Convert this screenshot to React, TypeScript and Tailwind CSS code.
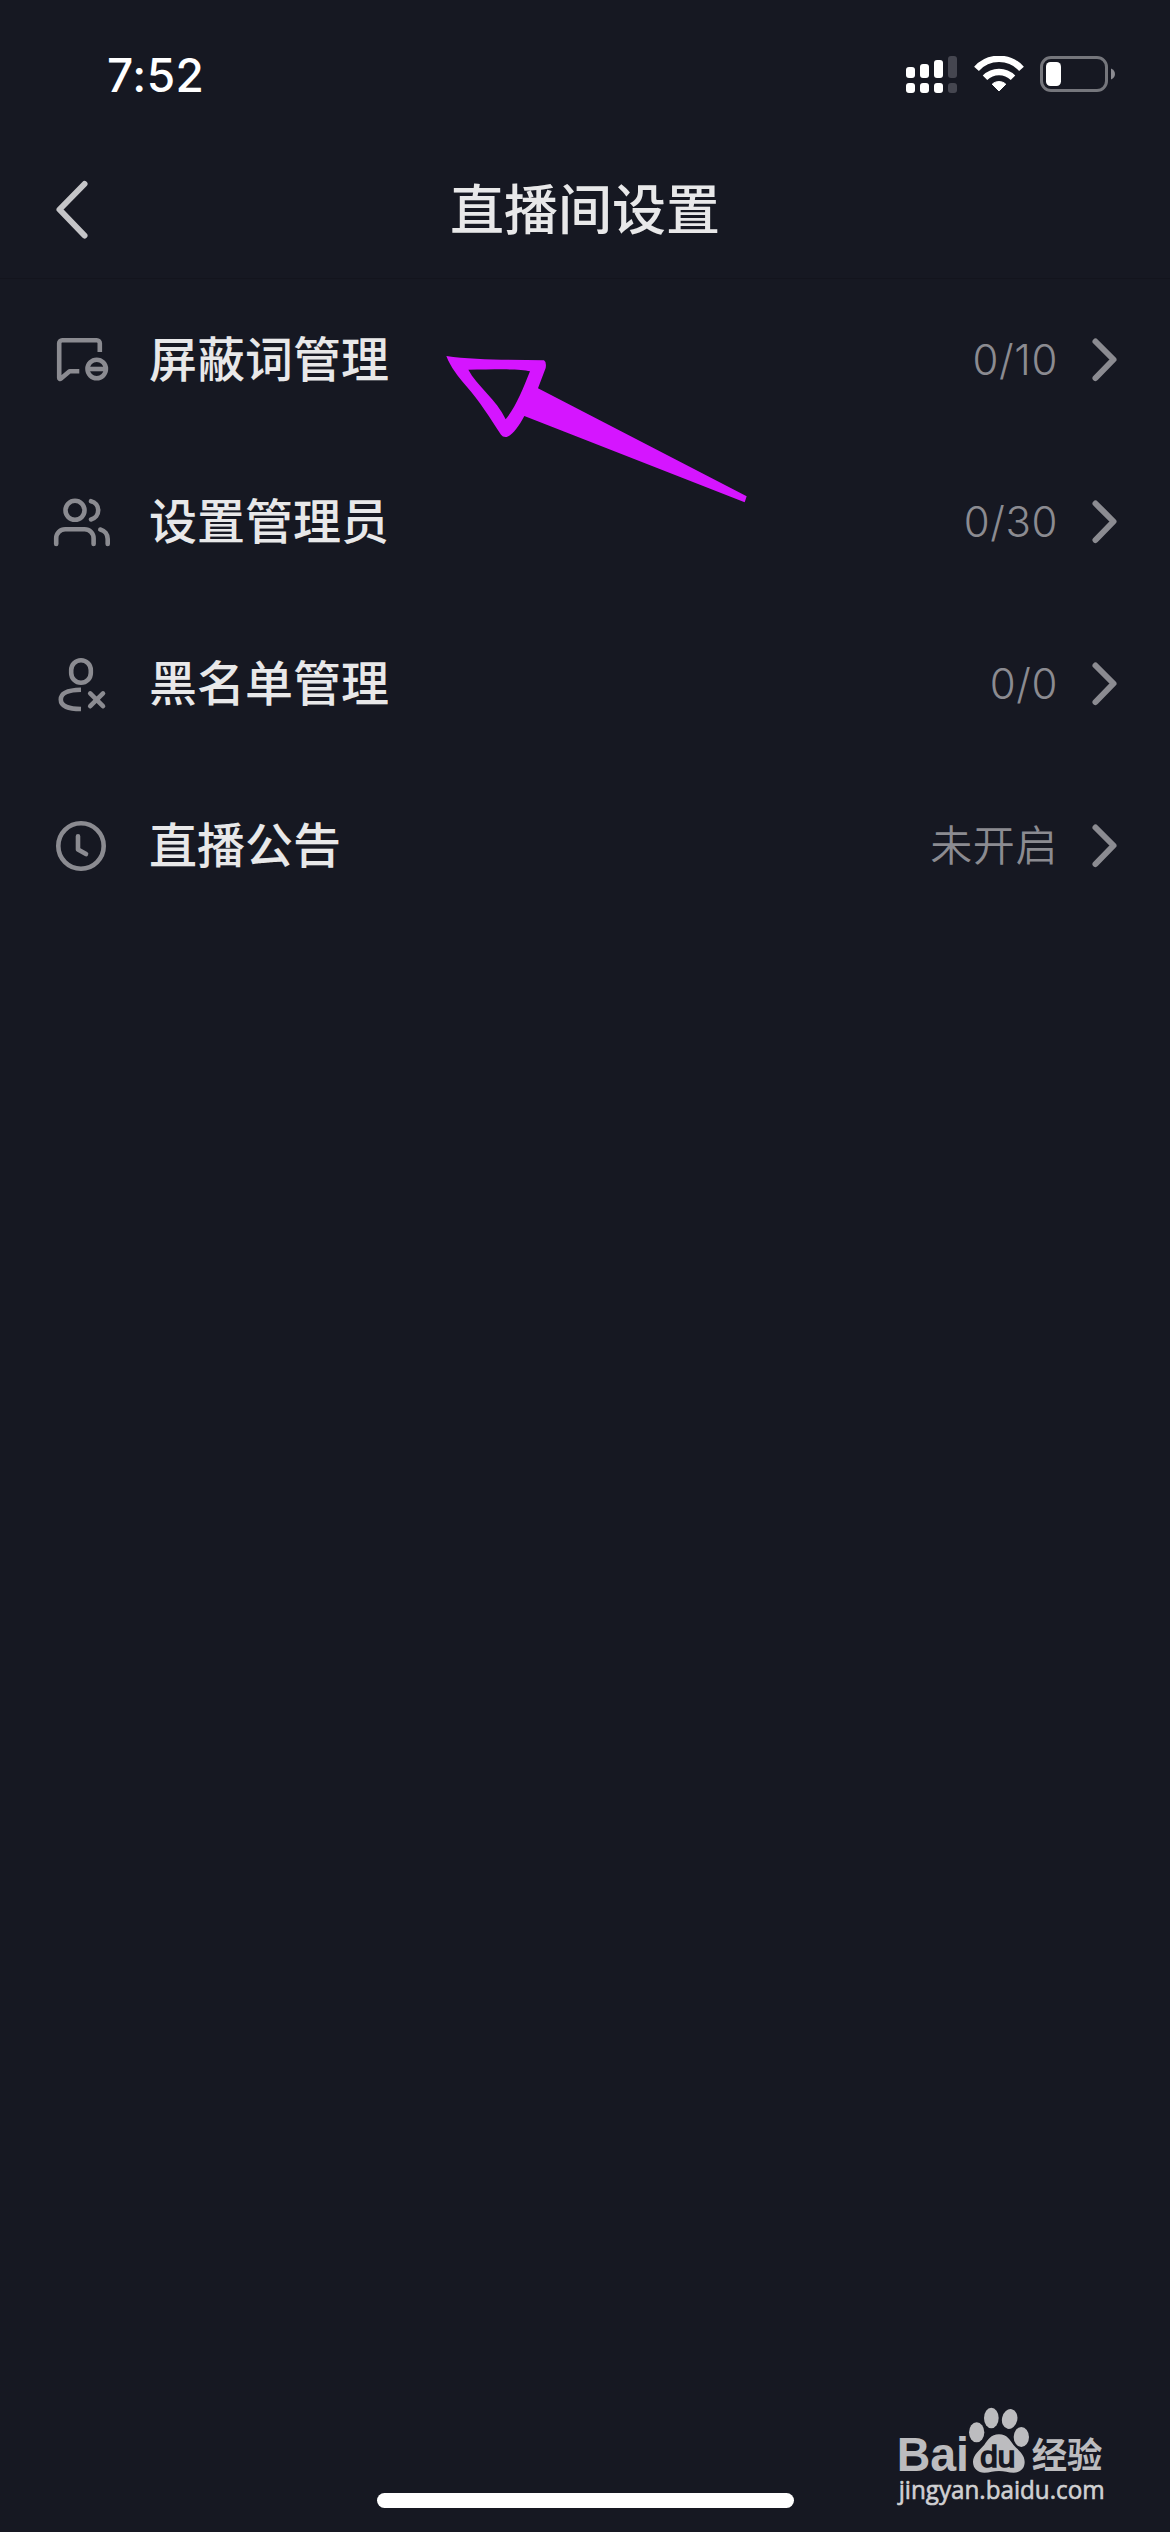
import type { FC, ReactNode } from "react"

type IconProps = {
  className?: string
}

type RowIconProps = {
  children: ReactNode
}

const RowIcon: FC<RowIconProps> = ({ children }) => (
  <svg
    className="size-[60px] shrink-0"
    viewBox="0 0 60 60"
    fill="none"
    stroke="currentColor"
    strokeWidth="4.6"
    strokeLinecap="round"
    strokeLinejoin="round"
  >
    {children}
  </svg>
)

const BlockedWordsIcon: FC = () => (
  <RowIcon>
    <path
      d="M48.800 22V13.200a3 3 0 0 0-3-3H11.200a3 3 0 0 0-3 3V48c0 .8.9 1.200 1.500.7L18.600 41.200H28.300"
      strokeLinecap="butt"
    />
    <circle cx="45.7" cy="39" r="9.2" />
    <path d="M37 39h17.400" strokeLinecap="butt" />
  </RowIcon>
)

const AdminsIcon: FC = () => (
  <RowIcon>
    <circle cx="24" cy="18.3" r="9.5" />
    <path d="M5.200 52V46.300a9 9 0 0 1 9-9H33.600a9 9 0 0 1 9 9V52" />
    <path d="M40 9.200c4.300.9 7.200 4.700 7.200 9.100s-2.900 8.200-7.200 9.100" />
    <path d="M49.300 37.500c4.500 1.200 7.400 5 7.400 9.500v5" />
  </RowIcon>
)

const BlacklistIcon: FC = () => (
  <RowIcon>
    <rect x="20.2" y="6.2" width="19.6" height="22.6" rx="9.8" />
    <path
      d="M30 35.800C17 36 9.800 38.500 9.800 45.500S17 54.800 30 55"
      strokeLinecap="butt"
    />
    <path d="M39.200 39.400l12.800 12.800M52 39.400L39.200 52.200" />
  </RowIcon>
)

const NoticeIcon: FC = () => (
  <RowIcon>
    <circle cx="30" cy="30" r="22.7" />
    <path d="M27 20.300V33.500l8 4.600" />
  </RowIcon>
)

const Chevron: FC<IconProps> = ({ className }) => (
  <svg
    className={className}
    viewBox="0 0 30 50"
    fill="none"
    stroke="currentColor"
    strokeWidth="6"
    strokeLinecap="round"
    strokeLinejoin="round"
  >
    <path d="M5.500 6.500l18 18L5.500 43" />
  </svg>
)

const BackIcon: FC<IconProps> = ({ className }) => (
  <svg
    className={className}
    viewBox="0 0 40 70"
    fill="none"
    stroke="currentColor"
    strokeWidth="6"
    strokeLinecap="round"
    strokeLinejoin="round"
  >
    <path d="M34.500 9L9.500 34.500l25 26" />
  </svg>
)

const SignalIcon: FC = () => (
  <svg className="w-[52px] h-[38px]" viewBox="0 0 52 38" fill="#fff">
    <rect x="0" y="11" width="9" height="11" rx="3" />
    <rect x="14" y="8" width="9" height="14" rx="3" />
    <rect x="28" y="4" width="9" height="18" rx="3" />
    <rect x="42" y="0" width="9" height="22" rx="3" fill="#454650" />
    <rect x="0" y="27" width="9" height="10" rx="3" />
    <rect x="14" y="27" width="9" height="10" rx="3" />
    <rect x="28" y="27" width="9" height="10" rx="3" />
    <rect x="42" y="27" width="9" height="10" rx="3" fill="#454650" />
  </svg>
)

const WifiIcon: FC = () => (
  <svg
    className="w-[50px] h-[38px]"
    viewBox="0 0 50 38"
    fill="none"
    stroke="#fff"
    strokeWidth="6.4"
  >
    <path d="M2.500 12.800C14.500 -0.500 35.500 -0.500 47.500 12.800" />
    <path d="M11 21.800c7.800-7.800 20.200-7.800 28 0" />
    <path
      d="M18.200 28.200c3.800-3.500 9.800-3.500 13.600 0L25 35z"
      fill="#fff"
      strokeWidth="1"
      strokeLinejoin="round"
    />
  </svg>
)

const BatteryIcon: FC = () => (
  <svg className="w-[76px] h-[38px]" viewBox="0 0 76 38">
    <rect
      x="1.5"
      y="1.5"
      width="65"
      height="33"
      rx="9.5"
      fill="none"
      stroke="#75767c"
      strokeWidth="3"
    />
    <rect x="6" y="6" width="15" height="24" rx="4.5" fill="#fff" />
    <path d="M71 12.500c5.300 2 5.300 9 0 11z" fill="#8b8b91" />
  </svg>
)

const Pointer: FC<IconProps> = ({ className }) => (
  <svg className={className} viewBox="0 0 990 510" fill="#d515ff">
    <path
      fillRule="evenodd"
      d="M49 48C130 60 240 59 342 61Q350 66 347 84L324 145L950 469L944 487L283 228C265 262 248 284 230 291Q219 293 213 284C180 233 150 185 108 137C84 109 62 82 49 48ZM115 89C140 137 200 179 227 238C258 200 278 149 300 94C270 85 190 89 115 89Z"
    />
  </svg>
)

const Watermark: FC<IconProps> = ({ className }) => (
  <svg className={className} viewBox="0 0 720 420" fill="#bcbcbf">
    <text
      x="50"
      y="244"
      fontFamily="Liberation Sans, sans-serif"
      fontWeight="700"
      fontSize="142"
      textLength="217"
      lengthAdjust="spacingAndGlyphs"
    >
      Bai
    </text>
    <ellipse cx="290" cy="127" rx="23" ry="30" />
    <ellipse cx="334" cy="84" rx="22" ry="31" />
    <ellipse cx="389" cy="87" rx="23" ry="30" transform="rotate(12 389 87)" />
    <ellipse cx="424" cy="141" rx="23" ry="30" />
    <path d="M357 133c-25 0-33 17-44 31-14 17-34 29-34 52 0 20 15 32 34 32 16 0 28-5 44-5s28 5 44 5c19 0 33-12 33-32 0-23-20-35-34-52-11-14-18-31-43-31z" />
    <text
      x="301"
      y="231"
      fill="#161822"
      stroke="#161822"
      strokeWidth="5"
      fontFamily="Liberation Sans, sans-serif"
      fontSize="90"
      textLength="105"
      lengthAdjust="spacingAndGlyphs"
    >
      du
    </text>
    <text
      x="455"
      y="235"
      fontFamily="Noto Sans CJK SC, sans-serif"
      fontWeight="700"
      fontSize="107"
      textLength="212"
      lengthAdjust="spacingAndGlyphs"
    >
      经验
    </text>
    <text
      x="56"
      y="327"
      fill="#d0d0d2"
      stroke="#d0d0d2"
      strokeWidth="2"
      fontFamily="Open Sans, sans-serif"
      fontWeight="500"
      fontSize="79"
      textLength="618"
      lengthAdjust="spacingAndGlyphs"
    >
      jingyan.baidu.com
    </text>
  </svg>
)

type SettingRowProps = {
  icon: ReactNode
  label: string
  value: string
}

const SettingRow: FC<SettingRowProps> = ({ icon, label, value }) => (
  <li className="flex items-center h-[162px] pl-[51px] pr-[50px] text-[#8b8b91]">
    {icon}
    <span className="ml-[38px] text-[48px] leading-none font-medium text-[#e8e8e9]">
      {label}
    </span>
    <span className="ml-auto text-[42px] leading-none font-[350] tracking-[0.6px]">
      {value}
    </span>
    <Chevron className="ml-[32px] w-[30px] h-[50px]" />
  </li>
)

const rows: SettingRowProps[] = [
  { icon: <BlockedWordsIcon />, label: "屏蔽词管理", value: "0/10" },
  { icon: <AdminsIcon />, label: "设置管理员", value: "0/30" },
  { icon: <BlacklistIcon />, label: "黑名单管理", value: "0/0" },
  { icon: <NoticeIcon />, label: "直播公告", value: "未开启" },
]

const StatusBar: FC = () => (
  <div className="flex items-center justify-between h-[150px] pl-[107px] pr-[54px]">
    <span className="text-[46px] leading-none font-[550] tracking-[0.5px] text-white">
      7:52
    </span>
    <div className="flex">
      <SignalIcon />
      <div className="ml-[16px]">
        <WifiIcon />
      </div>
      <div className="ml-[16px]">
        <BatteryIcon />
      </div>
    </div>
  </div>
)

const App: FC = () => (
  <div className="relative flex flex-col w-[1170px] h-[2532px] overflow-hidden bg-[#161822] font-['Inter','Noto_Sans_CJK_SC',sans-serif]">
    <StatusBar />
    <header className="grid grid-cols-[1fr_auto_1fr] items-center h-[129px] pb-[9px] border-b border-[#13141d] px-[50px]">
      <BackIcon className="w-[40px] h-[70px] text-[#c5c5c8]" />
      <h1 className="pt-[3px] text-[54px] leading-none font-medium text-[#e8e8e9]">
        直播间设置
      </h1>
    </header>
    <ul className="flex flex-col">
      {rows.map((row) => (
        <SettingRow key={row.label} {...row} />
      ))}
    </ul>
    <Pointer className="absolute left-[430px] top-[340px] w-[330px] h-[170px]" />
    <Watermark className="absolute left-[880px] top-[2390px] w-[240px] h-[140px]" />
    <div className="mt-auto mb-[24px] self-center w-[417px] h-[15px] rounded-full bg-white" />
  </div>
)

export default App
